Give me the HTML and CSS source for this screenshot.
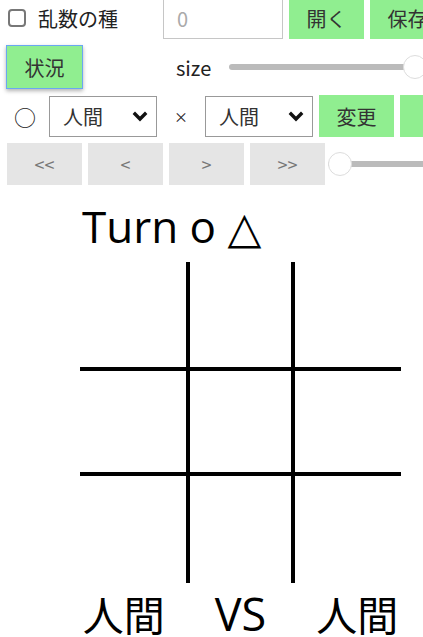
FILE: index.html
```html
<!DOCTYPE html>
<html lang="ja">
<head>
  <meta charset="UTF-8" />
  <meta name="viewport" content="width=device-width, initial-scale=1.0"/>
  <title>○×ゲーム</title>
  <link rel="stylesheet" href="styles.css">
</head>
<body>

  <div class="controls">
    <div class="row">
      <label class="seed-label"><input type="checkbox" class="chk"> <span>乱数の種</span></label>
      <input type="text" class="seed" placeholder="0">
      <button class="green">開く</button>
      <button class="green">保存</button>
    </div>

    <div class="row">
      <button class="green status">状況</button>
      <span class="size-label">size</span>
      <input type="range" class="slider size-slider" min="3" max="9" value="9">
    </div>

    <div class="row">
      <span class="mark">○</span>
      <span class="select-wrap">
        <select><option>人間</option><option>AI</option></select>
        <svg class="chev" width="16" height="11" viewBox="0 0 16 11"><path d="M1.8 1.8 L8 8 L14.2 1.8" fill="none" stroke="#111" stroke-width="3.4"/></svg>
      </span>
      <span class="mark small">×</span>
      <span class="select-wrap">
        <select><option>人間</option><option>AI</option></select>
        <svg class="chev" width="16" height="11" viewBox="0 0 16 11"><path d="M1.8 1.8 L8 8 L14.2 1.8" fill="none" stroke="#111" stroke-width="3.4"/></svg>
      </span>
      <button class="green">変更</button>
      <button class="green wide">リセット</button>
    </div>

    <div class="row">
      <button class="nav">&lt;&lt;</button>
      <button class="nav">&lt;</button>
      <button class="nav">&gt;</button>
      <button class="nav">&gt;&gt;</button>
      <input type="range" class="slider move-slider" min="0" max="9" value="0">
    </div>
  </div>

  <div class="game">
    <div class="turn">Turn o △</div>
    <svg class="board" width="321" height="321" viewBox="0 0 321 321">
      <line x1="108" y1="0" x2="108" y2="321" stroke="#000" stroke-width="4"/>
      <line x1="213" y1="0" x2="213" y2="321" stroke="#000" stroke-width="4"/>
      <line x1="0" y1="107" x2="321" y2="107" stroke="#000" stroke-width="4"/>
      <line x1="0" y1="212" x2="321" y2="212" stroke="#000" stroke-width="4"/>
    </svg>
    <div class="players">
      <span>人間</span>
      <span class="vs">VS</span>
      <span>人間</span>
    </div>
  </div>

</body>
</html>
```

FILE: styles.css
```css
html, body {
  overflow: hidden;
}

body {
  margin: 0;
  font-family: "Noto Sans CJK JP", "Noto Sans", sans-serif;
  font-size: 20px;
  color: #222;
  background: #fff;
}

.controls {
  margin-top: -3px;
  padding-left: 7px;
  display: flex;
  flex-direction: column;
  gap: 6px;
  width: 600px;
}

.row {
  display: flex;
  align-items: center;
  gap: 6px;
  white-space: nowrap;
}

button {
  font-family: inherit;
  font-size: 20px;
  border: none;
  height: 42px;
  width: 75px;
  padding: 0;
  cursor: pointer;
}

button.green {
  background: #90ee90;
  color: #333;
}

button.wide {
  width: auto;
  padding: 0 30px;
}

.seed-label {
  width: 150px;
  display: flex;
  align-items: center;
  gap: 12px;
}

.chk {
  appearance: none;
  width: 18px;
  height: 18px;
  margin: 0 0 0 1px;
  border: 2px solid #777;
  border-radius: 4px;
  box-sizing: border-box;
}

.seed {
  width: 120px;
  height: 41px;
  box-sizing: border-box;
  border: 1px solid #c6c6c6;
  padding: 0 13px;
  font-family: inherit;
  font-size: 20px;
  outline: none;
}

.seed::placeholder {
  color: #aaa;
}

.status {
  margin-left: -1px;
  width: 77px;
  height: 44px;
  border: 1px solid #6aa7f2;
  box-shadow: 0 2px 4px rgba(0, 0, 0, 0.3);
}

.size-label {
  margin-left: 87px;
  width: 47px;
}

.slider {
  -webkit-appearance: none;
  appearance: none;
  height: 24px;
  margin: 0;
  background: transparent;
}

.slider::-webkit-slider-runnable-track {
  height: 6px;
  border-radius: 3px;
  background: #bbb;
}

.slider::-webkit-slider-thumb {
  -webkit-appearance: none;
  width: 24px;
  height: 24px;
  margin-top: -9px;
  border-radius: 50%;
  background: #fff;
  border: 1px solid #ddd;
  box-sizing: border-box;
}

.size-slider {
  width: 198px;
}

.move-slider {
  width: 200px;
  margin-left: -3px;
}

.mark {
  width: 36px;
  text-align: center;
  font-size: 22px;
}

.mark.small {
  font-size: 14px;
  width: 42px;
  margin: 0 -3px;
}

.select-wrap {
  position: relative;
  display: inline-block;
}

select {
  -webkit-appearance: none;
  appearance: none;
  width: 108px;
  height: 41px;
  border: 1px solid #999;
  border-radius: 0;
  background: #fff;
  padding: 0 0 0 13px;
  font-family: inherit;
  font-size: 20px;
  color: #333;
}

.chev {
  position: absolute;
  right: 9px;
  top: 15px;
  pointer-events: none;
}

button.nav {
  background: #e5e5e5;
  color: #777;
  font-size: 18px;
}

.game {
  width: 321px;
  margin: 15px 0 0 80px;
  display: flex;
  flex-direction: column;
  font-family: "Open Sans", "DejaVu Sans", "Noto Sans CJK JP", sans-serif;
  color: #000;
}

.turn {
  font-size: 44px;
  line-height: 52px;
  padding-left: 2px;
  margin-bottom: 10px;
}

.board {
  display: block;
}

.players {
  display: flex;
  justify-content: center;
  align-items: baseline;
  gap: 50px;
  font-size: 41px;
  line-height: 52px;
  white-space: nowrap;
  margin-top: 5px;
}

.players .vs {
  font-size: 45px;
}
```
